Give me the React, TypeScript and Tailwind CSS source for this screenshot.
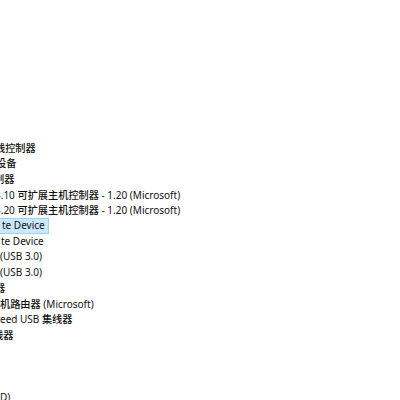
const rows: { text: string; ml: string; selected?: boolean }[] = [
  { text: '线控制器', ml: 'ml-[-5px]' },
  { text: '设备', ml: 'ml-[-4px]' },
  { text: '制器', ml: 'ml-[-6px]' },
  { text: '3.10 可扩展主机控制器 - 1.20 (Microsoft)', ml: 'ml-[-5px]' },
  { text: '3.20 可扩展主机控制器 - 1.20 (Microsoft)', ml: 'ml-[-5px]' },
  { text: 'te Device', ml: 'ml-[1px]', selected: true },
  { text: 'te Device', ml: 'ml-[1px]' },
  { text: '(USB 3.0)', ml: 'ml-0' },
  { text: '(USB 3.0)', ml: 'ml-0' },
  { text: '器', ml: 'ml-[-5px]' },
  { text: '机路由器 (Microsoft)', ml: 'ml-0' },
  { text: 'eed USB 集线器', ml: 'ml-0' },
  { text: '线器', ml: 'ml-[-7px]' },
  { text: '', ml: 'ml-0' },
  { text: '', ml: 'ml-0' },
  { text: '', ml: 'ml-0' },
  { text: 'D)', ml: 'ml-0' },
]

// split latin / CJK runs so the CJK glyphs get their own size
function Runs({ text }: { text: string }) {
  const parts = text.split(/([\u3400-\u9fff]+)/).filter(Boolean)
  return (
    <>
      {parts.map((p, i) =>
        /[\u3400-\u9fff]/.test(p) ? (
          <span key={i} className="text-[10.2px] font-medium font-['Noto_Sans_CJK_SC',sans-serif]">
            {p}
          </span>
        ) : (
          <span key={i}>{p}</span>
        ),
      )}
    </>
  )
}

export default function App() {
  return (
    <div className="w-[400px] h-[400px] overflow-hidden bg-white pt-[140px] font-['Noto_Sans','Noto_Sans_CJK_SC',sans-serif] text-[10px] text-[#111]">
      {rows.map((row, i) => (
        <div key={i} className="h-[15.58px] flex items-center whitespace-nowrap">
          {row.selected ? (
            <span className="ml-[-20px] pl-[21px] pr-[3px] h-[16px] flex items-center bg-[#cce8ff] border border-[#99d1ff]">
              <Runs text={row.text} />
            </span>
          ) : (
            <span className={row.ml}>
              <Runs text={row.text} />
            </span>
          )}
        </div>
      ))}
    </div>
  )
}
